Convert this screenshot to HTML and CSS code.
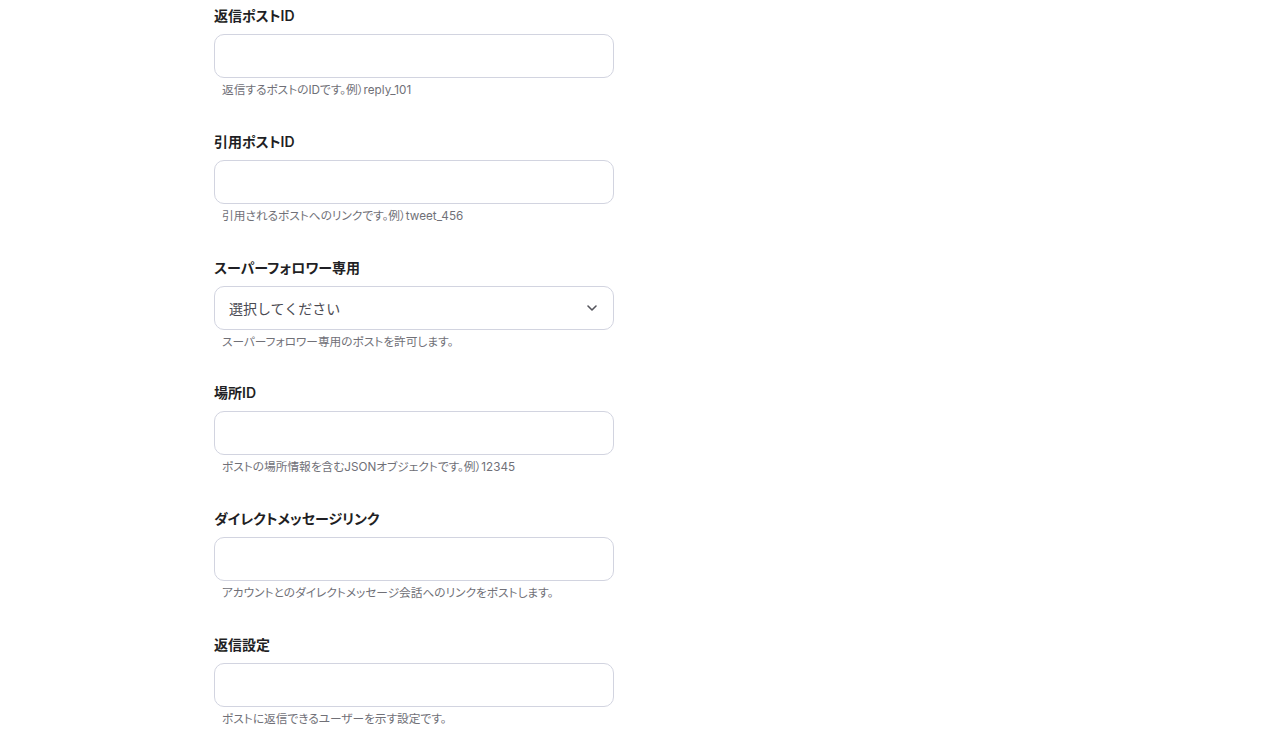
FILE: index.html
```html
<!DOCTYPE html>
<html>
<head>
    <link rel="stylesheet" href="styles.css">
</head>
<body>
    <div class="form">
        <div class="field">
            <label class="field-label">返信ポストID</label>
            <input class="field-input" type="text">
            <p class="field-help">返信するポストのIDです。例）reply_101</p>
        </div>
        <div class="field">
            <label class="field-label">引用ポストID</label>
            <input class="field-input" type="text">
            <p class="field-help">引用されるポストへのリンクです。例）tweet_456</p>
        </div>
        <div class="field">
            <label class="field-label">スーパーフォロワー専用</label>
            <div class="select">
                <span class="select-text">選択してください</span>
                <svg class="select-arrow" width="12" height="8" viewBox="0 0 12 8">
                    <path d="M2 2 L6 6 L10 2" fill="none" stroke="#55555c" stroke-width="1.6" stroke-linecap="round" stroke-linejoin="round"/>
                </svg>
            </div>
            <p class="field-help">スーパーフォロワー専用のポストを許可します。</p>
        </div>
        <div class="field">
            <label class="field-label">場所ID</label>
            <input class="field-input" type="text">
            <p class="field-help">ポストの場所情報を含むJSONオブジェクトです。例）12345</p>
        </div>
        <div class="field">
            <label class="field-label">ダイレクトメッセージリンク</label>
            <input class="field-input" type="text">
            <p class="field-help">アカウントとのダイレクトメッセージ会話へのリンクをポストします。</p>
        </div>
        <div class="field">
            <label class="field-label">返信設定</label>
            <input class="field-input" type="text">
            <p class="field-help">ポストに返信できるユーザーを示す設定です。</p>
        </div>
    </div>
</body>
</html>
```

FILE: styles.css
```css
body {
    margin: 0;
    background: #fff;
    font-family: "Inter", "Noto Sans CJK JP", sans-serif;
    font-feature-settings: "palt";
    color: #1f1f24;
    overflow: hidden;
}

.form {
    width: 400px;
    margin-left: 214px;
    padding-top: 5px;
}

.field {
    margin-bottom: 31.8px;
}

.field-label {
    display: block;
    font-size: 14px;
    font-weight: 600;
    line-height: 22px;
    margin-bottom: 7px;
}

.field-input,
.select {
    display: block;
    box-sizing: border-box;
    width: 400px;
    height: 44px;
    border: 1px solid #d2d4e0;
    border-radius: 10px;
    background: #fff;
    margin: 0;
    font-family: inherit;
}

.select {
    display: flex;
    align-items: center;
    justify-content: space-between;
    padding: 0 15px 0 14px;
}

.select-text {
    font-size: 14px;
    font-feature-settings: normal;
    color: #4a4a52;
}

.field-help {
    margin: 3px 0 0 8px;
    font-size: 11.7px;
    line-height: 18px;
    color: #707077;
}
```
